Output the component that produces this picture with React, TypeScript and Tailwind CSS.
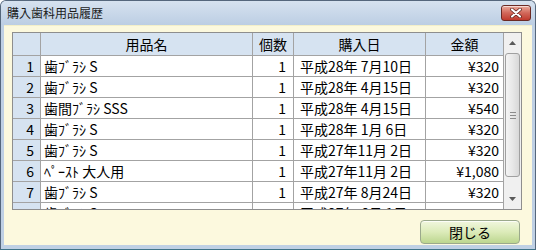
import React from "react"

type Row = { no: number; name: string; qty: number; date: string; price: string }

const rows: Row[] = [
  { no: 1, name: "歯ﾌﾞﾗｼ S", qty: 1, date: "平成28年 7月10日", price: "¥320" },
  { no: 2, name: "歯ﾌﾞﾗｼ S", qty: 1, date: "平成28年 4月15日", price: "¥320" },
  { no: 3, name: "歯間ﾌﾞﾗｼ SSS", qty: 1, date: "平成28年 4月15日", price: "¥540" },
  { no: 4, name: "歯ﾌﾞﾗｼ S", qty: 1, date: "平成28年 1月 6日", price: "¥320" },
  { no: 5, name: "歯ﾌﾞﾗｼ S", qty: 1, date: "平成27年11月 2日", price: "¥320" },
  { no: 6, name: "ﾍﾟｰｽﾄ 大人用", qty: 1, date: "平成27年11月 2日", price: "¥1,080" },
  { no: 7, name: "歯ﾌﾞﾗｼ S", qty: 1, date: "平成27年 8月24日", price: "¥320" },
  { no: 8, name: "歯ﾌﾞﾗｼ S", qty: 1, date: "平成27年 6月 1日", price: "¥320" },
]

const cols = "grid grid-cols-[28px_212px_41px_132px_78px]"

function CloseButton() {
  return (
    <div className="w-[30px] h-[16px] rounded-[3px] border border-[#6b2a24] bg-gradient-to-b from-[#e9aa9c] via-[#d1675a] to-[#c0392d] flex items-center justify-center shadow-[inset_0_1px_0_rgba(255,255,255,0.6)]">
      <svg width="14" height="10" viewBox="0 0 14 10">
        <path d="M3 1.5 L11 8.5 M11 1.5 L3 8.5" stroke="#5a1d17" strokeWidth="3.6" strokeLinecap="round" />
        <path d="M3 1.5 L11 8.5 M11 1.5 L3 8.5" stroke="#ffffff" strokeWidth="2.2" strokeLinecap="round" />
      </svg>
    </div>
  )
}

function ScrollBar() {
  return (
    <div className="w-[17px] h-full bg-[#f0f0f0] flex flex-col items-center">
      <div className="h-[20px] flex items-center justify-center">
        <svg width="7" height="4" viewBox="0 0 7 4">
          <path d="M0 4 L3.5 0 L7 4 Z" fill="#5a5a5a" />
        </svg>
      </div>
      <div className="w-[15px] h-[124px] rounded-[3px] border border-[#a0a0a0] bg-gradient-to-r from-[#f4f4f4] via-[#e8e8e8] to-[#d8d8d8] flex items-center justify-center">
        <div className="flex flex-col gap-[2px]">
          <div className="w-[6px] h-px bg-[#8c8c8c]" />
          <div className="w-[6px] h-px bg-[#8c8c8c]" />
          <div className="w-[6px] h-px bg-[#8c8c8c]" />
        </div>
      </div>
      <div className="flex-1" />
      <div className="h-[20px] flex items-center justify-center">
        <svg width="7" height="4" viewBox="0 0 7 4">
          <path d="M0 0 L3.5 4 L7 0 Z" fill="#5a5a5a" />
        </svg>
      </div>
    </div>
  )
}

export default function App() {
  return (
    <div className="w-[536px] h-[250px] flex flex-col bg-[#bfd0e4] border border-[#55677c] border-b-[#3f7488] rounded-t-[6px] overflow-hidden text-black font-['Noto_Sans_CJK_JP','Noto_Sans',sans-serif]">
      <div className="h-[24px] shrink-0 flex items-center justify-between pl-[6px] pr-[4px] bg-gradient-to-b from-[#d6e2ef] to-[#bccee3]">
        <span className="text-[12px] leading-none text-[#1b1b1b]">購入歯科用品履歴</span>
        <CloseButton />
      </div>

      <div className="flex-1 mx-[3px] mb-[4px] bg-[#fcf9de] border-t border-[#f3efc9] flex flex-col pl-[8px] pt-[6px]">
        <div className="w-[510px] h-[178px] border border-[#8e8e8e] bg-white flex overflow-hidden">
          <div className="flex flex-col overflow-hidden text-[14px] leading-none">
            <div className={`${cols} h-[23px] shrink-0 bg-[#d6e3f1] border-b border-[#a3a3a3]`}>
              <div className="border-r border-[#a3a3a3]" />
              <div className="border-r border-[#a3a3a3] flex items-center justify-center">用品名</div>
              <div className="border-r border-[#a3a3a3] flex items-center justify-center">個数</div>
              <div className="border-r border-[#a3a3a3] flex items-center justify-center">購入日</div>
              <div className="border-r border-[#a3a3a3] flex items-center justify-center">金額</div>
            </div>
            {rows.map((r) => (
              <div key={r.no} className={`${cols} h-[21px] shrink-0 border-b border-[#a3a3a3]`}>
                <div className="bg-[#d6e3f1] border-r border-[#a3a3a3] flex items-center justify-end pr-[6px]">{r.no}</div>
                <div className="border-r border-[#a3a3a3] flex items-center pl-[3px] whitespace-pre">{r.name}</div>
                <div className="border-r border-[#a3a3a3] flex items-center justify-end pr-[7px]">{r.qty}</div>
                <div className="border-r border-[#a3a3a3] flex items-center pl-[6px] whitespace-pre">{r.date}</div>
                <div className="border-r border-[#a3a3a3] flex items-center justify-end pr-[4px]">{r.price}</div>
              </div>
            ))}
          </div>
          <ScrollBar />
        </div>

        <div className="flex justify-end pr-[12px] mt-[10px]">
          <button className="w-[100px] h-[24px] rounded-[4px] border border-[#9ba98c] bg-gradient-to-b from-[#f1f7de] via-[#dcebb9] to-[#bcd68f] text-[14px] leading-none text-black shadow-[inset_0_1px_0_rgba(255,255,255,0.8)]">
            閉じる
          </button>
        </div>
      </div>
    </div>
  )
}
